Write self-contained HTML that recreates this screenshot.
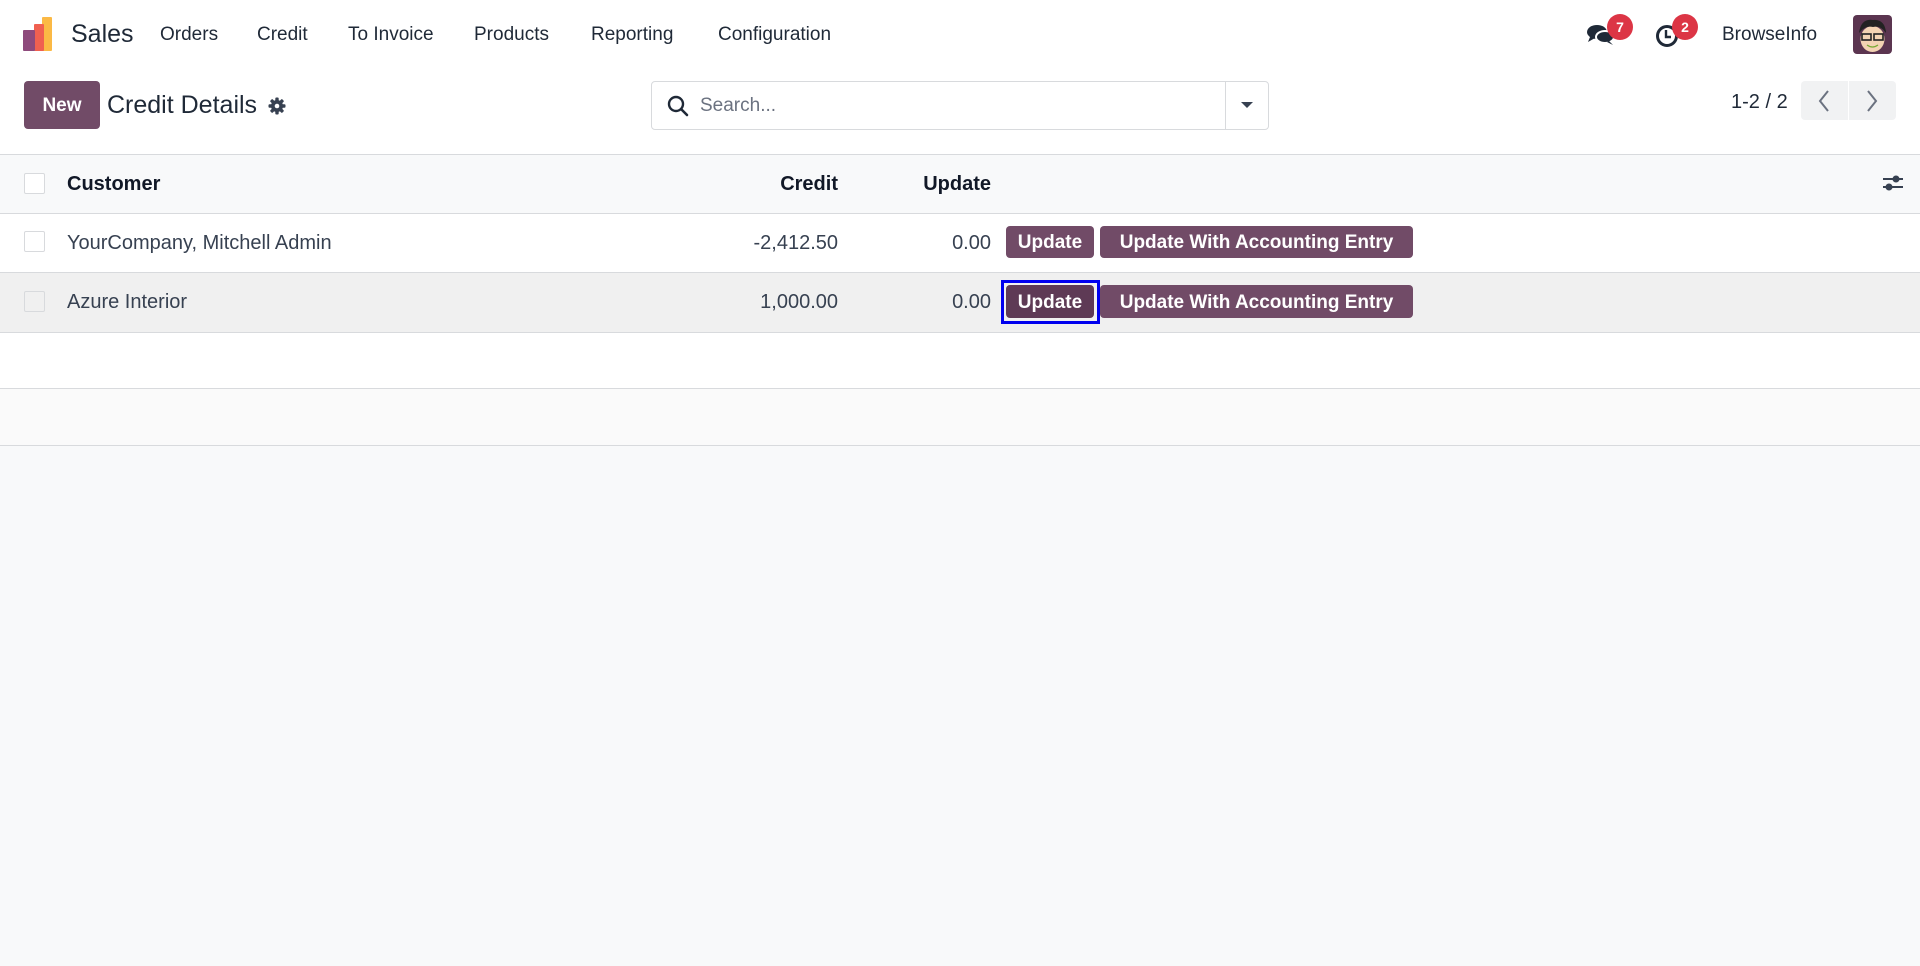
<!DOCTYPE html>
<html><head><meta charset="utf-8"><style>
*{box-sizing:border-box;margin:0;padding:0}
body{width:1920px;height:966px;background:#f8f9fa;font-family:"Liberation Sans",sans-serif;color:#374151;position:relative;overflow:hidden}
.a{position:absolute;white-space:nowrap}
.nav{position:absolute;left:0;top:0;width:1920px;height:154px;background:#fff}
.menu{font-size:19px;color:#1f2937;top:24px}
.btn{position:absolute;background:#714B67;color:#fff;font-weight:bold;border-radius:4px;font-size:19px;text-align:center;padding-top:2px}
.cb{position:absolute;left:24px;width:21px;height:21px;border:1px solid #d8dadd;background:#fff;border-radius:2px}
.line{position:absolute;left:0;width:1920px;height:1px;background:#d8dadd}
</style></head><body>
<div class="nav"></div>
<svg class="a" style="left:22px;top:17px" width="36" height="36" viewBox="0 0 36 36">
<rect x="20" y="0" width="10" height="34" rx="1" fill="#FBB945"/>
<rect x="12" y="7" width="10" height="27" rx="1" fill="#F06050"/>
<rect x="1" y="13" width="12" height="21" rx="1" fill="#8E4A7C"/>
</svg>
<div class="a" style="left:71px;top:20px;font-size:25px;color:#1f2937">Sales</div>
<div class="a menu" style="left:160px">Orders</div>
<div class="a menu" style="left:257px">Credit</div>
<div class="a menu" style="left:348px">To Invoice</div>
<div class="a menu" style="left:474px">Products</div>
<div class="a menu" style="left:591px">Reporting</div>
<div class="a menu" style="left:718px">Configuration</div>
<svg class="a" style="left:1586px;top:23px" width="30" height="24" viewBox="0 0 30 24"><ellipse cx="11" cy="9" rx="10" ry="7" fill="#1f2937"/><path d="M4 14 L2 19 L9 15Z" fill="#1f2937"/><ellipse cx="19" cy="14" rx="9" ry="6" fill="#1f2937" stroke="#fff" stroke-width="2"/><path d="M23 18 L27 22 L21 19Z" fill="#1f2937"/></svg>
<div class="a" style="left:1607px;top:14px;width:26px;height:26px;border-radius:13px;background:#dc3545;color:#fff;font-size:14px;font-weight:bold;text-align:center;line-height:26px">7</div>
<svg class="a" style="left:1655px;top:24px" width="24" height="24" viewBox="0 0 24 24"><circle cx="12" cy="12" r="9.5" fill="none" stroke="#1f2937" stroke-width="3"/><path d="M11 6v7h5" fill="none" stroke="#1f2937" stroke-width="2.4"/></svg>
<div class="a" style="left:1672px;top:14px;width:26px;height:26px;border-radius:13px;background:#dc3545;color:#fff;font-size:14px;font-weight:bold;text-align:center;line-height:26px">2</div>
<div class="a" style="left:1722px;top:24px;font-size:19px;color:#1f2937">BrowseInfo</div>
<svg class="a" style="left:1853px;top:15px" width="39" height="39" viewBox="0 0 39 39"><rect width="39" height="39" rx="4" fill="#5b3550"/><ellipse cx="19.5" cy="24" rx="12" ry="13" fill="#f3d3b3"/><path d="M6 18 Q8 3 20 5 Q32 4 33 18 Q28 10 20 12 Q12 10 6 18Z" fill="#222"/><rect x="9" y="19" width="9" height="6" fill="none" stroke="#222" stroke-width="1.6"/><rect x="21" y="19" width="9" height="6" fill="none" stroke="#222" stroke-width="1.6"/><path d="M14 30 Q19.5 34 25 30" fill="none" stroke="#7a3" stroke-width="1.3"/></svg>
<div class="btn" style="left:24px;top:81px;width:76px;height:48px;line-height:46px;font-size:19px">New</div>
<div class="a" style="left:107px;top:91px;font-size:25px;color:#1f2937">Credit Details</div>
<svg class="a" style="left:268px;top:97px" width="18" height="18" viewBox="0 0 18 18"><g fill="#374151"><circle cx="9" cy="9" r="6"/><rect x="7.3" y="0.5" width="3.4" height="17" rx="1"/><rect x="7.3" y="0.5" width="3.4" height="17" rx="1" transform="rotate(45 9 9)"/><rect x="7.3" y="0.5" width="3.4" height="17" rx="1" transform="rotate(90 9 9)"/><rect x="7.3" y="0.5" width="3.4" height="17" rx="1" transform="rotate(135 9 9)"/></g><circle cx="9" cy="9" r="2.3" fill="#fff"/></svg>
<div class="a" style="left:651px;top:81px;width:618px;height:49px;border:1px solid #d8dadd;border-radius:4px;background:#fff"></div>
<div class="a" style="left:1225px;top:82px;width:1px;height:47px;background:#d8dadd"></div>
<svg class="a" style="left:666px;top:94px" width="24" height="24" viewBox="0 0 24 24"><circle cx="10" cy="10" r="7" fill="none" stroke="#1f2937" stroke-width="2.4"/><path d="M15 15l6 6" stroke="#1f2937" stroke-width="2.6" stroke-linecap="round"/></svg>
<div class="a" style="left:700px;top:95px;font-size:19px;color:#6b7280">Search...</div>
<svg class="a" style="left:1240px;top:101px" width="14" height="8" viewBox="0 0 14 8"><path d="M1 1h12L7 7Z" fill="#374151"/></svg>
<div class="a" style="left:1731px;top:91px;font-size:20px;color:#1f2937">1-2 / 2</div>
<div class="a" style="left:1801px;top:81px;width:47px;height:39px;background:#f1f2f3;border-radius:4px 0 0 4px"></div>
<div class="a" style="left:1849px;top:81px;width:47px;height:39px;background:#f1f2f3;border-radius:0 4px 4px 0"></div>
<svg class="a" style="left:1816px;top:89px" width="16" height="24" viewBox="0 0 16 24"><path d="M12 2L4 12l8 10" fill="none" stroke="#6b7280" stroke-width="2"/></svg>
<svg class="a" style="left:1864px;top:89px" width="16" height="24" viewBox="0 0 16 24"><path d="M4 2l8 10-8 10" fill="none" stroke="#6b7280" stroke-width="2"/></svg>
<div class="a" style="left:0;top:154px;width:1920px;height:59px;background:#f8f9fa"></div>
<div class="a" style="left:0;top:213px;width:1920px;height:59px;background:#fff"></div>
<div class="a" style="left:0;top:272px;width:1920px;height:60px;background:#f0f0f0"></div>
<div class="a" style="left:0;top:332px;width:1920px;height:56px;background:#fff"></div>
<div class="a" style="left:0;top:388px;width:1920px;height:57px;background:#fafafa"></div>
<div class="line" style="top:154px"></div>
<div class="line" style="top:213px"></div>
<div class="line" style="top:272px"></div>
<div class="line" style="top:332px"></div>
<div class="line" style="top:388px"></div>
<div class="line" style="top:445px"></div>
<div class="cb" style="top:173px"></div>
<div class="cb" style="top:231px"></div>
<div class="cb" style="top:291px;background:#f0f0f0"></div>
<div class="a" style="left:67px;top:173px;font-size:20px;font-weight:bold;color:#111827">Customer</div>
<div class="a" style="left:738px;width:100px;text-align:right;top:173px;font-size:20px;font-weight:bold;color:#111827">Credit</div>
<div class="a" style="left:891px;width:100px;text-align:right;top:173px;font-size:20px;font-weight:bold;color:#111827">Update</div>
<svg class="a" style="left:1882px;top:172px" width="22" height="22" viewBox="0 0 22 22"><path d="M1 7h20M1 15h20" stroke="#374151" stroke-width="2"/><circle cx="14" cy="7" r="3.5" fill="#374151"/><circle cx="7" cy="15" r="3.5" fill="#374151"/></svg>
<div class="a" style="left:67px;top:232px;font-size:20px">YourCompany, Mitchell Admin</div>
<div class="a" style="left:638px;width:200px;text-align:right;top:232px;font-size:20px">-2,412.50</div>
<div class="a" style="left:891px;width:100px;text-align:right;top:232px;font-size:20px">0.00</div>
<div class="btn" style="left:1006px;top:226px;width:88px;height:32px;line-height:30px">Update</div>
<div class="btn" style="left:1100px;top:226px;width:313px;height:32px;line-height:30px">Update With Accounting Entry</div>
<div class="a" style="left:67px;top:291px;font-size:20px">Azure Interior</div>
<div class="a" style="left:638px;width:200px;text-align:right;top:291px;font-size:20px">1,000.00</div>
<div class="a" style="left:891px;width:100px;text-align:right;top:291px;font-size:20px">0.00</div>
<div class="a" style="left:1001px;top:280px;width:99px;height:44px;border:3px solid #0000ee"></div>
<div class="btn" style="left:1006px;top:285px;width:88px;height:33px;line-height:31px;background:#5e3a55">Update</div>
<div class="btn" style="left:1100px;top:285px;width:313px;height:33px;line-height:31px">Update With Accounting Entry</div>
</body></html>
